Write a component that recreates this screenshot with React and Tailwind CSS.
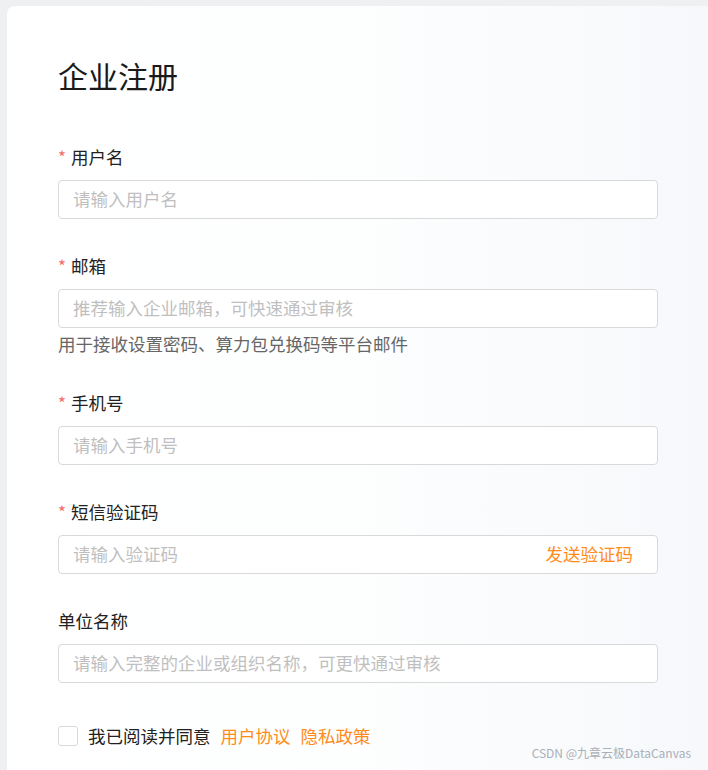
const fields = [
  { label: '用户名', required: true, placeholder: '请输入用户名' },
  {
    label: '邮箱',
    required: true,
    placeholder: '推荐输入企业邮箱，可快速通过审核',
    help: '用于接收设置密码、算力包兑换码等平台邮件',
  },
  { label: '手机号', required: true, placeholder: '请输入手机号' },
  { label: '短信验证码', required: true, placeholder: '请输入验证码', action: '发送验证码' },
  { label: '单位名称', required: false, placeholder: '请输入完整的企业或组织名称，可更快通过审核' },
];

function Field({ label, required, placeholder, help, action }) {
  return (
    <div className="mb-[35px]">
      <div className="flex items-center h-6 mb-[11px] text-[17.5px] leading-6 text-[#222]">
        {required && <span className="text-[#f56c6c] mr-[5px] text-[17px]">*</span>}
        <span>{label}</span>
      </div>
      <div className="flex items-center h-[39px] border border-[#d9d9d9] rounded-[4px] bg-white pl-[14px] pr-[24px]">
        <input
          className="flex-1 min-w-0 bg-transparent outline-none text-[17.5px] text-[#222] placeholder:text-[#bfbfbf]"
          placeholder={placeholder}
        />
        {action && <span className="text-[17.5px] text-[#ff8c1a] whitespace-nowrap">{action}</span>}
      </div>
      {help && <p className="mt-1 text-[17.5px] leading-6 text-[#666]">{help}</p>}
    </div>
  );
}

export default function App() {
  return (
    <div
      className="relative min-h-[770px] h-[770px] overflow-hidden bg-[#eef0f2] pl-[7px] pt-[6px]"
      style={{ fontFamily: '"Noto Sans CJK SC", "Noto Sans", sans-serif' }}
    >
      <div className="h-full rounded-tl-[8px] bg-gradient-to-r from-white via-[#fdfefe] to-[#f6f8fb] pl-[51px] pr-[50px] pt-[49px]">
        <h1 className="text-[30px] leading-10 text-[#1a1a1a] mb-[50px]">企业注册</h1>
        {fields.map((f) => (
          <Field key={f.label} {...f} />
        ))}
        <div className="flex items-center mt-[41px] text-[17.5px] leading-6">
          <span className="w-5 h-5 border border-[#d9d9d9] rounded-[3px] bg-white mr-[10px]" />
          <span className="text-[#222]">我已阅读并同意</span>
          <span className="text-[#ff8c1a] ml-[10px]">用户协议</span>
          <span className="text-[#ff8c1a] ml-[10px]">隐私政策</span>
        </div>
      </div>
      <div className="absolute right-[17px] bottom-[8px] text-[12px] text-[#aab0b8]">CSDN @九章云极DataCanvas</div>
    </div>
  );
}
